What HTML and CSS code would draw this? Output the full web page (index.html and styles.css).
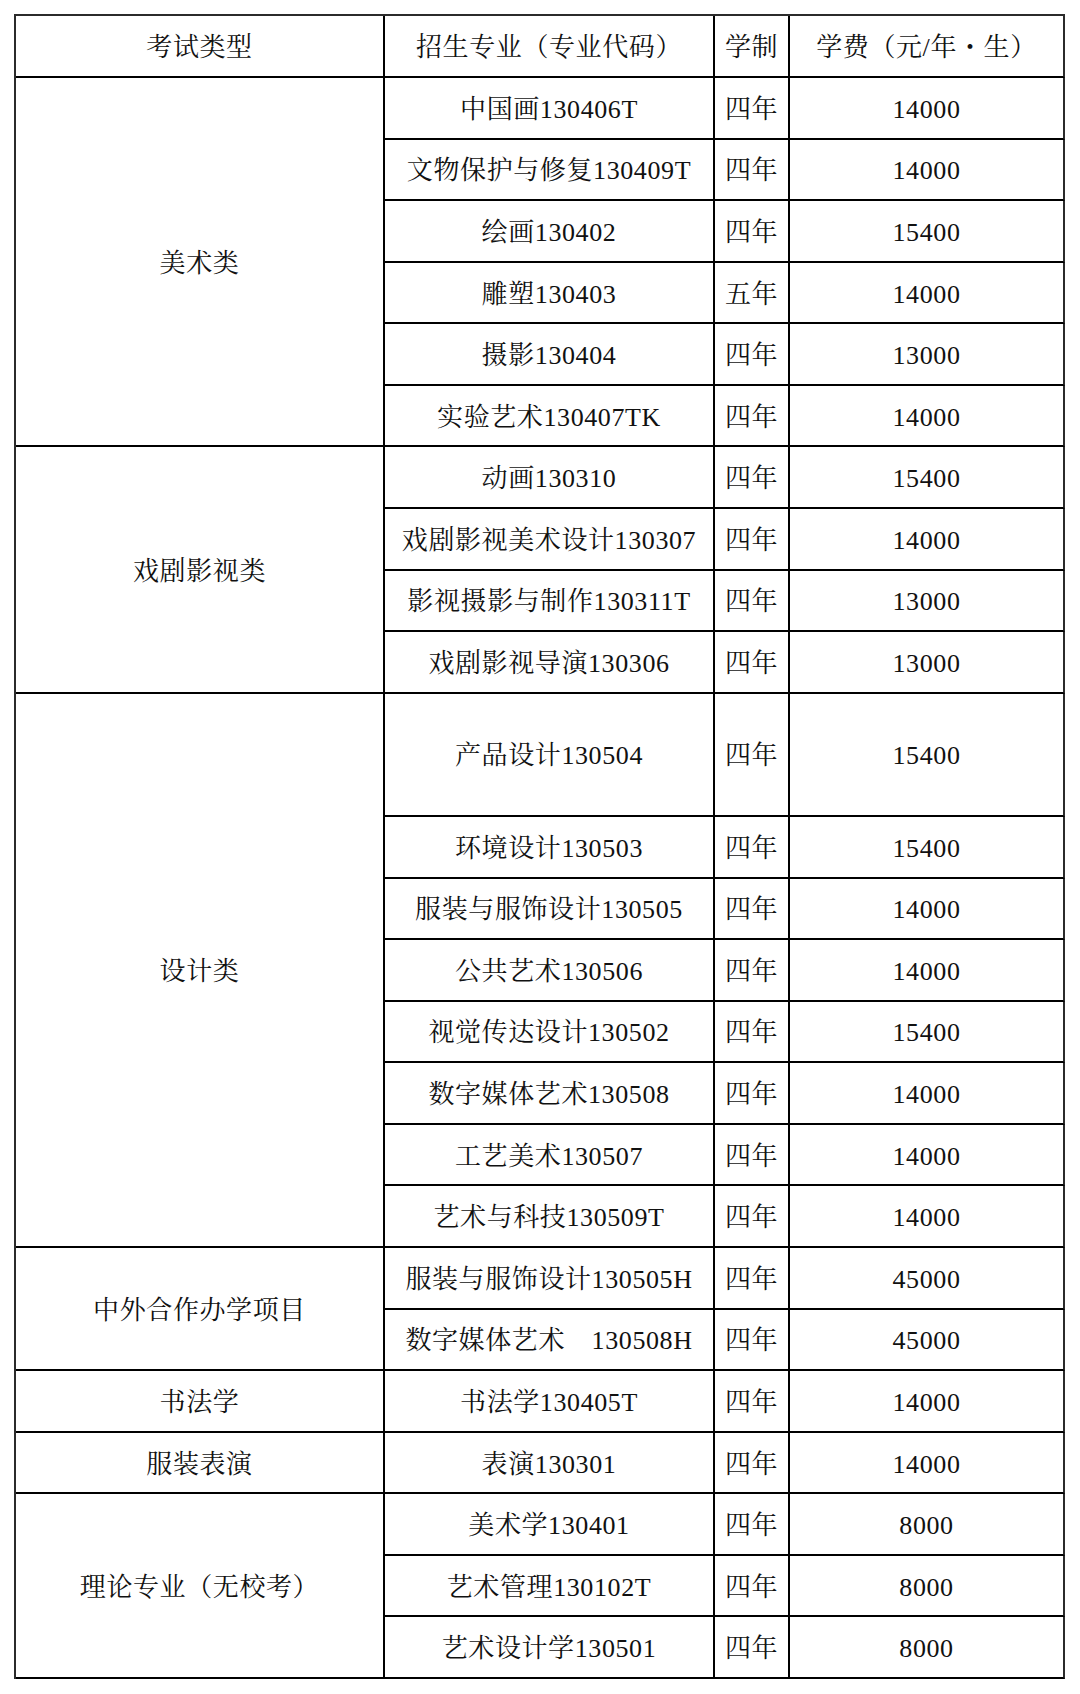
FILE: index.html
```html
<!DOCTYPE html>
<html lang="zh-CN">
<head>
<meta charset="utf-8">
<title>招生专业学费表</title>
<link rel="stylesheet" href="styles.css">
</head>
<body>
<div class="sheet">
  <div class="fee-table">
    <div class="cell c1 head">考试类型</div>
    <div class="cell c2 head">招生专业（专业代码）</div>
    <div class="cell c3 head">学制</div>
    <div class="cell c4 head">学费（元/年・生）</div>

    <div class="cell c1 span6">美术类</div>
    <div class="cell c2">中国画130406T</div><div class="cell c3">四年</div><div class="cell c4">14000</div>
    <div class="cell c2">文物保护与修复130409T</div><div class="cell c3">四年</div><div class="cell c4">14000</div>
    <div class="cell c2">绘画130402</div><div class="cell c3">四年</div><div class="cell c4">15400</div>
    <div class="cell c2">雕塑130403</div><div class="cell c3">五年</div><div class="cell c4">14000</div>
    <div class="cell c2">摄影130404</div><div class="cell c3">四年</div><div class="cell c4">13000</div>
    <div class="cell c2">实验艺术130407TK</div><div class="cell c3">四年</div><div class="cell c4">14000</div>

    <div class="cell c1 span4">戏剧影视类</div>
    <div class="cell c2">动画130310</div><div class="cell c3">四年</div><div class="cell c4">15400</div>
    <div class="cell c2">戏剧影视美术设计130307</div><div class="cell c3">四年</div><div class="cell c4">14000</div>
    <div class="cell c2">影视摄影与制作130311T</div><div class="cell c3">四年</div><div class="cell c4">13000</div>
    <div class="cell c2">戏剧影视导演130306</div><div class="cell c3">四年</div><div class="cell c4">13000</div>

    <div class="cell c1 span9">设计类</div>
    <div class="cell c2 span2">产品设计130504</div><div class="cell c3 span2">四年</div><div class="cell c4 span2">15400</div>
    <div class="cell c2">环境设计130503</div><div class="cell c3">四年</div><div class="cell c4">15400</div>
    <div class="cell c2">服装与服饰设计130505</div><div class="cell c3">四年</div><div class="cell c4">14000</div>
    <div class="cell c2">公共艺术130506</div><div class="cell c3">四年</div><div class="cell c4">14000</div>
    <div class="cell c2">视觉传达设计130502</div><div class="cell c3">四年</div><div class="cell c4">15400</div>
    <div class="cell c2">数字媒体艺术130508</div><div class="cell c3">四年</div><div class="cell c4">14000</div>
    <div class="cell c2">工艺美术130507</div><div class="cell c3">四年</div><div class="cell c4">14000</div>
    <div class="cell c2">艺术与科技130509T</div><div class="cell c3">四年</div><div class="cell c4">14000</div>

    <div class="cell c1 span2">中外合作办学项目</div>
    <div class="cell c2">服装与服饰设计130505H</div><div class="cell c3">四年</div><div class="cell c4">45000</div>
    <div class="cell c2">数字媒体艺术　130508H</div><div class="cell c3">四年</div><div class="cell c4">45000</div>

    <div class="cell c1">书法学</div>
    <div class="cell c2">书法学130405T</div><div class="cell c3">四年</div><div class="cell c4">14000</div>

    <div class="cell c1">服装表演</div>
    <div class="cell c2">表演130301</div><div class="cell c3">四年</div><div class="cell c4">14000</div>

    <div class="cell c1 span3">理论专业（无校考）</div>
    <div class="cell c2">美术学130401</div><div class="cell c3">四年</div><div class="cell c4">8000</div>
    <div class="cell c2">艺术管理130102T</div><div class="cell c3">四年</div><div class="cell c4">8000</div>
    <div class="cell c2">艺术设计学130501</div><div class="cell c3">四年</div><div class="cell c4">8000</div>
  </div>
</div>
</body>
</html>
```
FILE: styles.css
```css
html, body {
  margin: 0;
  padding: 0;
  background: #ffffff;
}

.sheet {
  padding: 14px 0 0 14px;
}

.fee-table {
  display: grid;
  grid-template-columns: 369px 330px 75px 275px;
  grid-template-rows: 62px;
  grid-auto-rows: 61.58px;
  width: max-content;
  border-top: 2px solid #2b2b2b;
  border-left: 2px solid #2b2b2b;
  font-family: "Liberation Serif", "Noto Serif CJK SC", "Source Han Serif SC", "AR PL UMing CN", "Noto Sans CJK SC", serif;
  font-size: 26px;
  letter-spacing: 0.6px;
  color: #111111;
}

.cell {
  box-sizing: border-box;
  border-right: 2px solid #000000;
  border-bottom: 2px solid #000000;
  display: flex;
  align-items: center;
  justify-content: center;
  white-space: nowrap;
  line-height: 1;
  padding-top: 4px;
}

.c1 { grid-column: 1; }
.c2 { grid-column: 2; }
.c3 { grid-column: 3; }
.c4 { grid-column: 4; border-right-color: #2b2b2b; }

.span2 { grid-row: span 2; }
.span3 { grid-row: span 3; }
.span4 { grid-row: span 4; }
.span6 { grid-row: span 6; }
.span9 { grid-row: span 9; }
```
